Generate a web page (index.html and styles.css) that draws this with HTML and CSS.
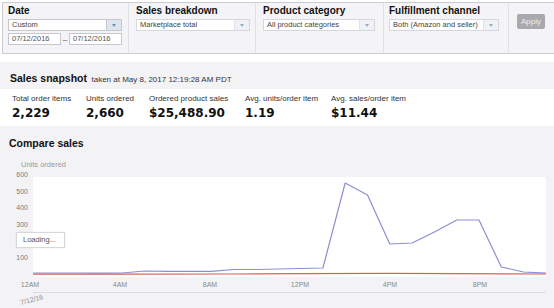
FILE: index.html
```html
<!DOCTYPE html>
<html>
<head>
<meta charset="utf-8">
<link rel="stylesheet" href="styles.css">
</head>
<body>
<div class="filters">
  <div class="group g-date">
    <div class="label">Date</div>
    <div class="select sel-date"><span class="val">Custom</span><span class="arrow"></span></div>
    <div class="dates">
      <div class="dinput">07/12/2016</div>
      <div class="dash">–</div>
      <div class="dinput">07/12/2016</div>
    </div>
  </div>
  <div class="group g-breakdown">
    <div class="label">Sales breakdown</div>
    <div class="select sel-breakdown light"><span class="val">Marketplace total</span><span class="arrow"></span></div>
  </div>
  <div class="group g-category">
    <div class="label">Product category</div>
    <div class="select sel-category light"><span class="val">All product categories</span><span class="arrow"></span></div>
  </div>
  <div class="group g-channel">
    <div class="label">Fulfillment channel</div>
    <div class="select sel-channel light"><span class="val">Both (Amazon and seller)</span><span class="arrow"></span></div>
  </div>
  <div class="group g-apply">
    <div class="apply">Apply</div>
  </div>
</div>

<div class="snapshot-head">
  <span class="title">Sales snapshot</span> <span class="taken">taken at May 8, 2017 12:19:28 AM PDT</span>
</div>

<div class="metrics">
  <div class="metric"><div class="m-label">Total order items</div><div class="m-value">2,229</div></div>
  <div class="metric"><div class="m-label">Units ordered</div><div class="m-value">2,660</div></div>
  <div class="metric"><div class="m-label">Ordered product sales</div><div class="m-value">$25,488.90</div></div>
  <div class="metric"><div class="m-label">Avg. units/order item</div><div class="m-value">1.19</div></div>
  <div class="metric"><div class="m-label">Avg. sales/order item</div><div class="m-value">$11.44</div></div>
</div>

<div class="compare">
  <h2 class="c-title">Compare sales</h2>
  <div class="units">Units ordered</div>
  <svg class="chart" width="554" height="138" viewBox="0 0 554 138">
    <rect x="33" y="7" width="513" height="100" fill="#ffffff"/>
    <g class="ylab" font-size="7" fill="#7a7a7a" text-anchor="end">
      <text x="28" y="7">600</text>
      <text x="28" y="23.7">500</text>
      <text x="28" y="40.4">400</text>
      <text x="28" y="57">300</text>
      <text x="28" y="90.4">100</text>
    </g>
    <polyline fill="none" stroke="#8b8ed6" stroke-width="1.2" stroke-linejoin="round"
      points="33,103 55.3,103 77.6,103 99.9,103.2 122.2,103 144.5,101 166.8,101.4 189.1,101.4 211.4,101.4 233.7,99.5 256,99.5 278.3,99 300.6,98.5 322.9,98 345.2,13 367.5,25 389.8,74 412.1,73 434.4,62 456.7,50 479,50 501.3,97 523.6,102 546,103.2"/>
    <polyline fill="none" stroke="#e05c5c" stroke-width="1.2"
      points="33,104.2 122,104.2 233,104 300,103.6 390,103.4 456,103.6 546,104"/>
    <g class="xlab" font-size="7" fill="#8a8a8a" text-anchor="middle">
      <text x="30" y="117">12AM</text>
      <text x="120" y="117">4AM</text>
      <text x="210" y="117">8AM</text>
      <text x="300" y="117">12PM</text>
      <text x="390" y="117">4PM</text>
      <text x="480" y="117">8PM</text>
    </g>
    <line x1="33" y1="122.5" x2="546" y2="122.5" stroke="#dcdce2" stroke-width="1"/>
    <text x="21" y="135" font-size="7" fill="#8a8a8a" transform="rotate(-15 21 135)">7/12/16</text>
  </svg>
  <div class="loading">Loading...</div>
</div>
</body>
</html>
```

FILE: styles.css
```css
body {
  margin: 0;
  width: 554px;
  height: 308px;
  overflow: hidden;
  background: #ffffff;
  color: #222222;
  font-family: "Liberation Sans", Arial, sans-serif;
}

.filters {
  display: flex;
  height: 52px;
  margin: 2px 0 0 2px;
  box-sizing: border-box;
  border: 1px solid #cbcbd1;
  border-right: 0;
  background: #f4f4f7;
}

.group {
  box-sizing: border-box;
  border-right: 1px solid #e0e0e6;
  padding-top: 2px;
}

.g-date { width: 126px; padding-left: 5px; }
.g-breakdown { width: 127px; padding-left: 7px; }
.g-category { width: 128px; padding-left: 7px; }
.g-channel { width: 125px; padding-left: 5px; }
.g-apply { flex: 1; border-right: 0; padding: 11px 0 0 8px; }

.label {
  font-weight: bold;
  font-size: 10px;
  line-height: 12px;
  margin-bottom: 2px;
  color: #111111;
}

.select {
  display: flex;
  height: 12px;
  box-sizing: border-box;
  border: 1px solid #c6c6cc;
  background: #ffffff;
  font-size: 7.5px;
  line-height: 10px;
}

.select .val {
  flex: 1;
  padding-left: 3px;
  color: #444444;
  white-space: nowrap;
  overflow: hidden;
}

.select .arrow {
  width: 14px;
  border-left: 1px solid #c6c6cc;
  background: #dde6ef;
  display: flex;
  align-items: center;
  justify-content: center;
}

.select .arrow::after {
  content: "";
  border-left: 2.5px solid transparent;
  border-right: 2.5px solid transparent;
  border-top: 3px solid #7890aa;
}

.select.light { border-color: #d6d6dc; }
.select.light .arrow { background: #eef2f6; border-left-color: #e2e2e8; }
.select.light .arrow::after { border-top-color: #9aaec2; }

.sel-date { width: 114px; }
.sel-breakdown { width: 114px; }
.sel-category { width: 112px; }
.sel-channel { width: 110px; }

.dates {
  display: flex;
  align-items: center;
  width: 114px;
  margin-top: 2px;
}

.dinput {
  width: 53px;
  height: 12px;
  box-sizing: border-box;
  border: 1px solid #c6c6cc;
  background: #ffffff;
  font-size: 7.5px;
  line-height: 10px;
  padding-left: 3px;
  color: #555555;
}

.dash {
  flex: 1;
  text-align: center;
  font-size: 8px;
  color: #444444;
}

.apply {
  width: 28px;
  height: 15px;
  border-radius: 2px;
  background: #a9a9ad;
  color: #eeeeee;
  font-size: 8px;
  line-height: 15px;
  text-align: center;
}

.snapshot-head {
  margin-top: 8px;
  height: 27px;
  box-sizing: border-box;
  padding: 8px 0 0 10px;
  background: #f3f3f6;
  line-height: 13px;
}

.snapshot-head .title {
  font-size: 10.5px;
  font-weight: bold;
  color: #111111;
}

.snapshot-head .taken {
  font-size: 8px;
  color: #333333;
}

.metrics {
  display: grid;
  grid-template-columns: 74px 63px 96px 86px auto;
  height: 37px;
  box-sizing: border-box;
  padding: 5px 0 0 12px;
  background: #ffffff;
}

.m-label {
  font-size: 8px;
  line-height: 10px;
  color: #333333;
  white-space: nowrap;
}

.m-value {
  margin-top: 2px;
  font-family: "DejaVu Sans", Verdana, sans-serif;
  font-weight: bold;
  font-size: 12px;
  line-height: 14px;
  color: #111111;
  white-space: nowrap;
}

.compare {
  position: relative;
  height: 182px;
  box-sizing: border-box;
  padding-top: 11px;
  background: #f3f3f6;
}

.c-title {
  margin: 0;
  padding-left: 9px;
  font-size: 10.5px;
  line-height: 13px;
  font-weight: bold;
  color: #111111;
}

.units {
  margin-top: 10px;
  padding-left: 21px;
  font-size: 7.5px;
  line-height: 10px;
  color: #999999;
}

.chart {
  display: block;
  font-family: "Liberation Sans", Arial, sans-serif;
}

.loading {
  position: absolute;
  top: 106px;
  left: 16px;
  width: 49px;
  height: 16px;
  box-sizing: border-box;
  border: 1px solid #d8d8dc;
  background: #ffffff;
  box-shadow: 0 0 2px rgba(0, 0, 0, 0.08);
  padding-left: 6px;
  font-size: 7.5px;
  line-height: 14px;
  color: #555555;
}
```
